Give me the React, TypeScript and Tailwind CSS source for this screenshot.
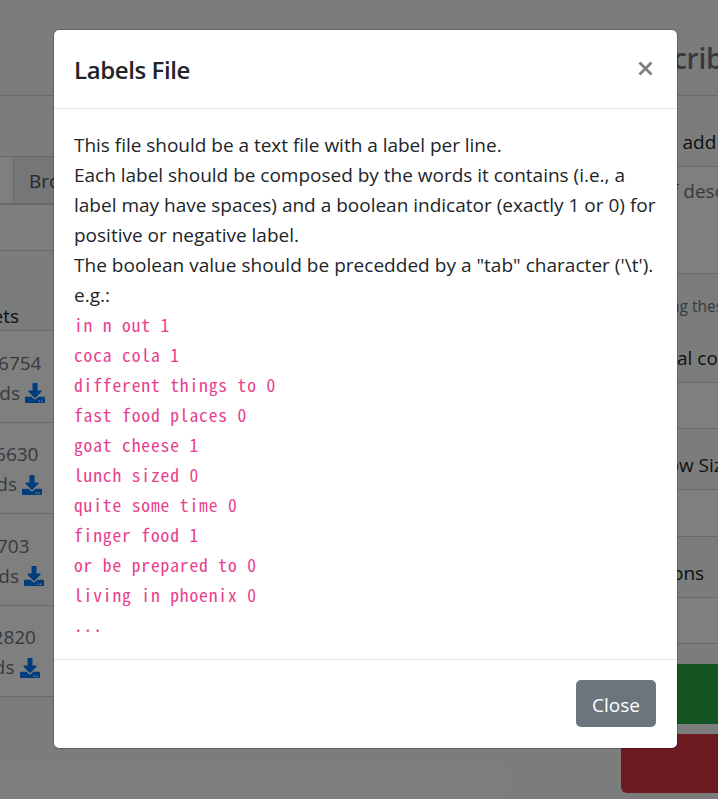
import type { ReactNode } from "react";
import { FaDownload } from "react-icons/fa";

const rows = [
  { count: "6754", width: "w-[41.5px]", iconEnd: "w-[45px]" },
  { count: "6630", width: "w-[38.5px]", iconEnd: "w-[42px]" },
  { count: "703", width: "w-[29.5px]", iconEnd: "w-[44px]" },
  { count: "2820", width: "w-[36px]", iconEnd: "w-[39.5px]" },
];

const samples = [
  "in n out 1",
  "coca cola 1",
  "different things to 0",
  "fast food places 0",
  "goat cheese 1",
  "lunch sized 0",
  "quite some time 0",
  "finger food 1",
  "or be prepared to 0",
  "living in phoenix 0",
  "...",
];

function Field({ label, pad, input }: { label: string; pad: string; input: string }) {
  return (
    <>
      <div className={`flex h-[30px] items-center whitespace-nowrap ${pad}`}>{label}</div>
      <div className={`border-y border-[#ced4da] bg-white ${input}`} />
    </>
  );
}

function LeftPanel() {
  return (
    <div className="flex w-[300px] flex-col overflow-hidden">
      <div className="h-[96px] shrink-0 border-b border-[#d2d4d6]" />
      <div className="h-[60px] shrink-0" />
      <div className="flex h-[49px] shrink-0 border-t border-b-2 border-[#ced4da] bg-white">
        <div className="w-[13px]" />
        <div className="flex flex-1 items-center border-l border-[#ced4da] bg-[#e9ecef] pt-[2px] pl-[15px] text-[#495057]">
          Browse
        </div>
      </div>
      <div className="h-[46px] shrink-0 border-b border-[#d2d4d6] bg-[#fdfdfd]" />
      <div className="flex h-[80px] shrink-0 items-end border-b border-[#d2d4d6]">
        <div className="flex h-[27px] w-[19px] items-center justify-end">ets</div>
      </div>
      {rows.map((r) => (
        <div
          key={r.count}
          className="flex h-[91.5px] shrink-0 flex-col border-b border-[#d2d4d6] bg-white pt-[17px] text-[#6c757d]"
        >
          <div className={`flex h-[30px] items-center justify-end ${r.width}`}>{r.count}</div>
          <div className={`flex h-[30px] items-center justify-end gap-[5px] ${r.iconEnd}`}>
            <span>ds</span>
            <FaDownload className="size-[20px] shrink-0 text-[#007bff]" />
          </div>
        </div>
      ))}
    </div>
  );
}

function RightPanel() {
  return (
    <div className="ml-auto flex w-[97px] flex-col overflow-hidden">
      <div className="flex h-[96px] shrink-0 items-center whitespace-nowrap border-b border-[#d2d4d6] pt-[21px] pl-[52px] text-[28px] font-semibold tracking-[-0.3px] text-[#6c757d]">
        cribe
      </div>
      <div className="flex h-[70px] shrink-0 items-end pb-[10px] pl-[61.5px]">add</div>
      <div className="h-[108px] shrink-0 whitespace-nowrap border-y border-[#ced4da] bg-white pt-[9px] pl-[51px] leading-[30px] text-[#6c757d]">
        f desc
      </div>
      <div className="flex h-[69px] shrink-0 items-center whitespace-nowrap pb-[3px] pl-[49px] text-[15.5px] text-[#6c757d]">
        ng these
      </div>
      <Field label="al co" pad="pl-[56px]" input="mt-[9px] h-[47px] shrink-0" />
      <div className="h-[21px] shrink-0" />
      <Field label="ow Size" pad="pl-[46.5px]" input="mt-[9px] h-[48px] shrink-0" />
      <div className="h-[21px] shrink-0" />
      <Field label="ons" pad="pl-[51px]" input="mt-[9px] h-[47px] shrink-0" />
      <div className="mt-[20px] h-[60px] shrink-0 rounded-l-[6px] bg-[#28a745]" />
      <div className="mt-[10px] h-[59px] shrink-0 rounded-l-[6px] bg-[#dc3545]" />
    </div>
  );
}

function Line({ className, children }: { className: string; children: ReactNode }) {
  return (
    <div className="h-[30px]">
      <span className={className}>{children}</span>
    </div>
  );
}

export default function App() {
  return (
    <div className="relative h-[799px] w-[718px] overflow-hidden bg-[#f7faf8] font-['Open_Sans','Noto_Sans',sans-serif] text-[19px] text-[#212529]">
      <div className="flex h-full">
        <LeftPanel />
        <RightPanel />
      </div>
      <div className="absolute inset-0 bg-black/50" />
      <div className="absolute top-[29px] left-[53px] flex h-[720px] w-[625px] flex-col rounded-[6px] border border-black/20 bg-white bg-clip-padding">
        <div className="flex h-[79px] shrink-0 items-center justify-between border-b border-[#dee2e6] pr-[24px] pl-[20px]">
          <h5 className="pt-[2px] text-[24px] font-semibold tracking-[-0.4px]">Labels File</h5>
          <svg className="mb-[2px] size-[15px]" viewBox="0 0 15 15" stroke="#7f7f7f" strokeWidth="2.8">
            <path d="M1.5 1.5 13.5 13.5M13.5 1.5 1.5 13.5" />
          </svg>
        </div>
        <div className="flex-1 whitespace-nowrap pt-[21px] pl-[20px] leading-[30px]">
          <Line className="tracking-[-0.02px]">This file should be a text file with a label per line.</Line>
          <Line className="tracking-[-0.01px]">Each label should be composed by the words it contains (i.e., a</Line>
          <Line className="tracking-[0px]">label may have spaces) and a boolean indicator (exactly 1 or 0) for</Line>
          <Line className="tracking-[0px]">positive or negative label.</Line>
          <Line className="tracking-[0.03px]">The boolean value should be precedded by a "tab" character ('\t').</Line>
          <Line className="tracking-[0px]">e.g.:</Line>
          <div className="font-['Noto_Sans_Mono_CJK_SC','Liberation_Mono',monospace] text-[17.5px] tracking-[0.875px] text-[#e83e8c]">
            {samples.map((s) => (
              <div key={s} className="h-[30px]">
                {s}
              </div>
            ))}
          </div>
        </div>
        <div className="flex h-[89px] shrink-0 items-start justify-end border-t border-[#dee2e6] pt-[20px] pr-[21px]">
          <button className="flex h-[47px] w-[80px] items-center justify-center rounded-[5px] bg-[#6c757d] pt-[3px] text-white">
            Close
          </button>
        </div>
      </div>
    </div>
  );
}
